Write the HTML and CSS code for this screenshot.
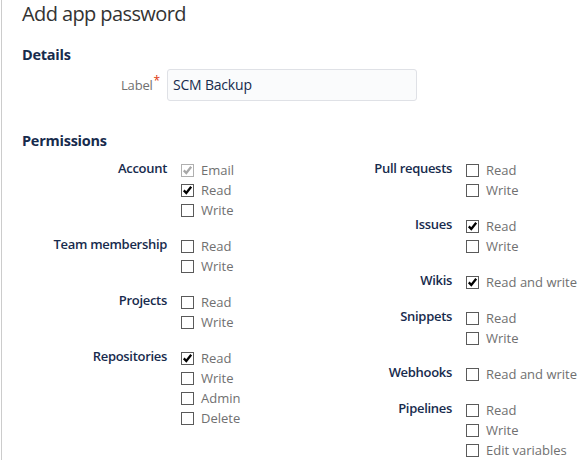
FILE: index.html
```html
<!DOCTYPE html>
<html>
<head>
<meta charset="utf-8">
<link rel="stylesheet" href="styles.css">
</head>
<body>
<div class="page">
  <h1 class="title">Add app password</h1>
  <h2 class="section">Details</h2>
  <div class="field">
    <label class="field-label">Label<span class="req">*</span></label>
    <div class="input">SCM Backup</div>
  </div>
  <h2 class="section perms-title">Permissions</h2>
  <div class="perms">
    <div class="col">
      <div class="group">
        <div class="glabel">Account</div>
        <div class="opts">
          <div class="opt disabled"><span class="cb checked"><svg viewBox="0 0 11 11"><path d="M1.8 5.4 L4.3 8 L9.2 1.8"/></svg></span>Email</div>
          <div class="opt"><span class="cb checked"><svg viewBox="0 0 11 11"><path d="M1.8 5.4 L4.3 8 L9.2 1.8"/></svg></span>Read</div>
          <div class="opt"><span class="cb"></span>Write</div>
        </div>
      </div>
      <div class="group">
        <div class="glabel">Team membership</div>
        <div class="opts">
          <div class="opt"><span class="cb"></span>Read</div>
          <div class="opt"><span class="cb"></span>Write</div>
        </div>
      </div>
      <div class="group">
        <div class="glabel">Projects</div>
        <div class="opts">
          <div class="opt"><span class="cb"></span>Read</div>
          <div class="opt"><span class="cb"></span>Write</div>
        </div>
      </div>
      <div class="group">
        <div class="glabel">Repositories</div>
        <div class="opts">
          <div class="opt"><span class="cb checked"><svg viewBox="0 0 11 11"><path d="M1.8 5.4 L4.3 8 L9.2 1.8"/></svg></span>Read</div>
          <div class="opt"><span class="cb"></span>Write</div>
          <div class="opt"><span class="cb"></span>Admin</div>
          <div class="opt"><span class="cb"></span>Delete</div>
        </div>
      </div>
    </div>
    <div class="col">
      <div class="group">
        <div class="glabel">Pull requests</div>
        <div class="opts">
          <div class="opt"><span class="cb"></span>Read</div>
          <div class="opt"><span class="cb"></span>Write</div>
        </div>
      </div>
      <div class="group">
        <div class="glabel">Issues</div>
        <div class="opts">
          <div class="opt"><span class="cb checked"><svg viewBox="0 0 11 11"><path d="M1.8 5.4 L4.3 8 L9.2 1.8"/></svg></span>Read</div>
          <div class="opt"><span class="cb"></span>Write</div>
        </div>
      </div>
      <div class="group">
        <div class="glabel">Wikis</div>
        <div class="opts">
          <div class="opt"><span class="cb checked"><svg viewBox="0 0 11 11"><path d="M1.8 5.4 L4.3 8 L9.2 1.8"/></svg></span>Read and write</div>
        </div>
      </div>
      <div class="group">
        <div class="glabel">Snippets</div>
        <div class="opts">
          <div class="opt"><span class="cb"></span>Read</div>
          <div class="opt"><span class="cb"></span>Write</div>
        </div>
      </div>
      <div class="group">
        <div class="glabel">Webhooks</div>
        <div class="opts">
          <div class="opt"><span class="cb"></span>Read and write</div>
        </div>
      </div>
      <div class="group">
        <div class="glabel">Pipelines</div>
        <div class="opts">
          <div class="opt"><span class="cb"></span>Read</div>
          <div class="opt"><span class="cb"></span>Write</div>
          <div class="opt"><span class="cb"></span>Edit variables</div>
        </div>
      </div>
    </div>
  </div>
</div>
</body>
</html>
```

FILE: styles.css
```css
* { box-sizing: border-box; }
html, body {
  margin: 0;
  padding: 0;
  background: #fff;
  overflow: hidden;
}
body {
  font-family: "Open Sans", "Noto Sans", sans-serif;
  width: 578px;
  height: 460px;
}
.page {
  margin-left: 1px;
  border-left: 1px solid #cccccc;
  padding-left: 20px;
  height: 460px;
}
.title {
  margin: 0;
  padding-top: 1px;
  font-size: 20px;
  line-height: 26px;
  font-weight: 400;
  color: #333333;
  letter-spacing: -0.6px;
}
.section {
  margin: 18px 0 0 0;
  font-size: 14.5px;
  line-height: 20px;
  font-weight: 700;
  color: #172b4d;
  letter-spacing: -0.25px;
}
.field {
  display: grid;
  grid-template-columns: 138px 250px;
  column-gap: 7px;
  margin-top: 4px;
  align-items: center;
}
.field-label {
  text-align: right;
  font-size: 13px;
  color: #707070;
  letter-spacing: -0.2px;
}
.req {
  color: #de350b;
  font-size: 12px;
  position: relative;
  top: -5px;
  margin-left: 1px;
}
.input {
  height: 32px;
  border: 1px solid #dfe1e6;
  border-radius: 3px;
  background: #fafbfc;
  padding: 0 5px;
  font-size: 14px;
  line-height: 30px;
  color: #172b4d;
  letter-spacing: -0.2px;
}
.perms-title {
  margin-top: 30px;
}
.perms {
  display: grid;
  grid-template-columns: 285px 285px;
  margin-top: 9px;
}
.col {
  display: flex;
  flex-direction: column;
  gap: 16px;
}
.group {
  display: grid;
  grid-template-columns: 145px auto;
  column-gap: 14px;
}
.glabel {
  text-align: right;
  font-size: 13px;
  font-weight: 600;
  line-height: 20px;
  color: #172b4d;
  margin-top: -2px;
  white-space: nowrap;
  letter-spacing: -0.3px;
}
.opts {
  display: flex;
  flex-direction: column;
}
.opt {
  display: flex;
  align-items: center;
  height: 20px;
  font-size: 13px;
  color: #707070;
  white-space: nowrap;
}
.cb {
  width: 13px;
  height: 13px;
  border: 1px solid #5a5a5a;
  background: #fff;
  margin-right: 7px;
  flex: none;
  display: flex;
}
.cb svg {
  width: 11px;
  height: 11px;
}
.cb svg path {
  fill: none;
  stroke: #000;
  stroke-width: 2.3;
  stroke-linecap: butt;
  stroke-linejoin: miter;
}
.disabled .cb {
  border-color: #b0b0b0;
}
.disabled .cb svg path {
  stroke: #a8a8a8;
}
```
